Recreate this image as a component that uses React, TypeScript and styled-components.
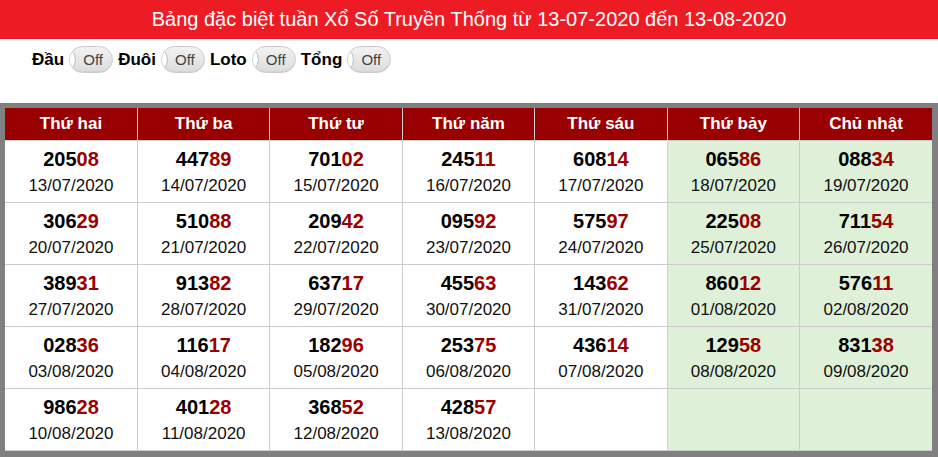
import React from "react";
import styled, { createGlobalStyle } from "styled-components";

const Global = createGlobalStyle`
  html, body { margin: 0; padding: 0; background: #fff; }
  body { font-family: Arial, "Liberation Sans", Helvetica, sans-serif; }
`;

const TitleBar = styled.div`
  height: 39px;
  background: #ed1c24;
  color: #fff;
  font-size: 20px;
  display: flex;
  align-items: center;
  justify-content: center;
`;

const ToggleRow = styled.div`
  display: flex;
  align-items: center;
  gap: 5px;
  padding: 6px 0 0 32px;
  height: 29px;
`;

const Label = styled.span`
  font-weight: bold;
  font-size: 17px;
  color: #000;
`;

const Toggle = styled.span`
  position: relative;
  box-sizing: border-box;
  width: 44px;
  height: 27px;
  border: 1px solid #cccccc;
  border-radius: 14px;
  background: linear-gradient(#f2f2f2, #dcdcdc);
  box-shadow: inset 0 -1px 1px rgba(0, 0, 0, 0.05);
  overflow: hidden;
  display: flex;
  align-items: center;
  justify-content: center;
  padding-left: 4px;
  font-size: 15px;
  color: #444;
  &::before {
    content: "";
    position: absolute;
    left: -21px;
    top: -1px;
    width: 25px;
    height: 25px;
    border-radius: 50%;
    background: #fff;
    border: 1px solid #b8b8b8;
  }
`;

const Frame = styled.div`
  margin-top: 29px;
  background: #808080;
  padding: 5px 6px 7px 5px;
`;

const Table = styled.table`
  width: 100%;
  border-collapse: collapse;
  table-layout: fixed;
  background: #fff;
`;

const Th = styled.th`
  background: #990000;
  color: #fff;
  font-size: 17px;
  font-weight: bold;
  height: 32px;
  padding: 0;
  border-left: 1px solid #d0d0d0;
  &:first-child { border-left: none; }
`;

const Td = styled.td<{ $weekend?: boolean }>`
  background: ${(p) => (p.$weekend ? "#dff0d8" : "#fff")};
  border: 1px solid #cccccc;
  text-align: center;
  padding: 5px 0 2px;
  height: 54px;
  box-sizing: border-box;
  vertical-align: top;
  &:first-child { border-left: none; }
  &:last-child { border-right: none; }
`;

const Num = styled.div`
  font-size: 20px;
  font-weight: bold;
  line-height: 26px;
  color: #000;
`;

const Tail = styled.span`
  color: #990000;
`;

const DateText = styled.div`
  font-size: 17px;
  line-height: 28px;
  color: #111;
`;

const days = ["Thứ hai", "Thứ ba", "Thứ tư", "Thứ năm", "Thứ sáu", "Thứ bảy", "Chủ nhật"];

type Cell = { n: string; d: string } | null;

const rows: Cell[][] = [
  [
    { n: "20508", d: "13/07/2020" },
    { n: "44789", d: "14/07/2020" },
    { n: "70102", d: "15/07/2020" },
    { n: "24511", d: "16/07/2020" },
    { n: "60814", d: "17/07/2020" },
    { n: "06586", d: "18/07/2020" },
    { n: "08834", d: "19/07/2020" },
  ],
  [
    { n: "30629", d: "20/07/2020" },
    { n: "51088", d: "21/07/2020" },
    { n: "20942", d: "22/07/2020" },
    { n: "09592", d: "23/07/2020" },
    { n: "57597", d: "24/07/2020" },
    { n: "22508", d: "25/07/2020" },
    { n: "71154", d: "26/07/2020" },
  ],
  [
    { n: "38931", d: "27/07/2020" },
    { n: "91382", d: "28/07/2020" },
    { n: "63717", d: "29/07/2020" },
    { n: "45563", d: "30/07/2020" },
    { n: "14362", d: "31/07/2020" },
    { n: "86012", d: "01/08/2020" },
    { n: "57611", d: "02/08/2020" },
  ],
  [
    { n: "02836", d: "03/08/2020" },
    { n: "11617", d: "04/08/2020" },
    { n: "18296", d: "05/08/2020" },
    { n: "25375", d: "06/08/2020" },
    { n: "43614", d: "07/08/2020" },
    { n: "12958", d: "08/08/2020" },
    { n: "83138", d: "09/08/2020" },
  ],
  [
    { n: "98628", d: "10/08/2020" },
    { n: "40128", d: "11/08/2020" },
    { n: "36852", d: "12/08/2020" },
    { n: "42857", d: "13/08/2020" },
    null,
    null,
    null,
  ],
];

export default function App() {
  return (
    <>
      <Global />
      <TitleBar>Bảng đặc biệt tuần Xổ Số Truyền Thống từ 13-07-2020 đến 13-08-2020</TitleBar>
      <ToggleRow>
        {["Đầu", "Đuôi", "Loto", "Tổng"].map((l) => (
          <React.Fragment key={l}>
            <Label>{l}</Label>
            <Toggle>Off</Toggle>
          </React.Fragment>
        ))}
      </ToggleRow>
      <Frame>
        <Table>
          <thead>
            <tr>
              {days.map((d) => (
                <Th key={d}>{d}</Th>
              ))}
            </tr>
          </thead>
          <tbody>
            {rows.map((r, i) => (
              <tr key={i}>
                {r.map((c, j) => (
                  <Td key={j} $weekend={j >= 5}>
                    {c && (
                      <>
                        <Num>
                          {c.n.slice(0, 3)}
                          <Tail>{c.n.slice(3)}</Tail>
                        </Num>
                        <DateText>{c.d}</DateText>
                      </>
                    )}
                  </Td>
                ))}
              </tr>
            ))}
          </tbody>
        </Table>
      </Frame>
    </>
  );
}
